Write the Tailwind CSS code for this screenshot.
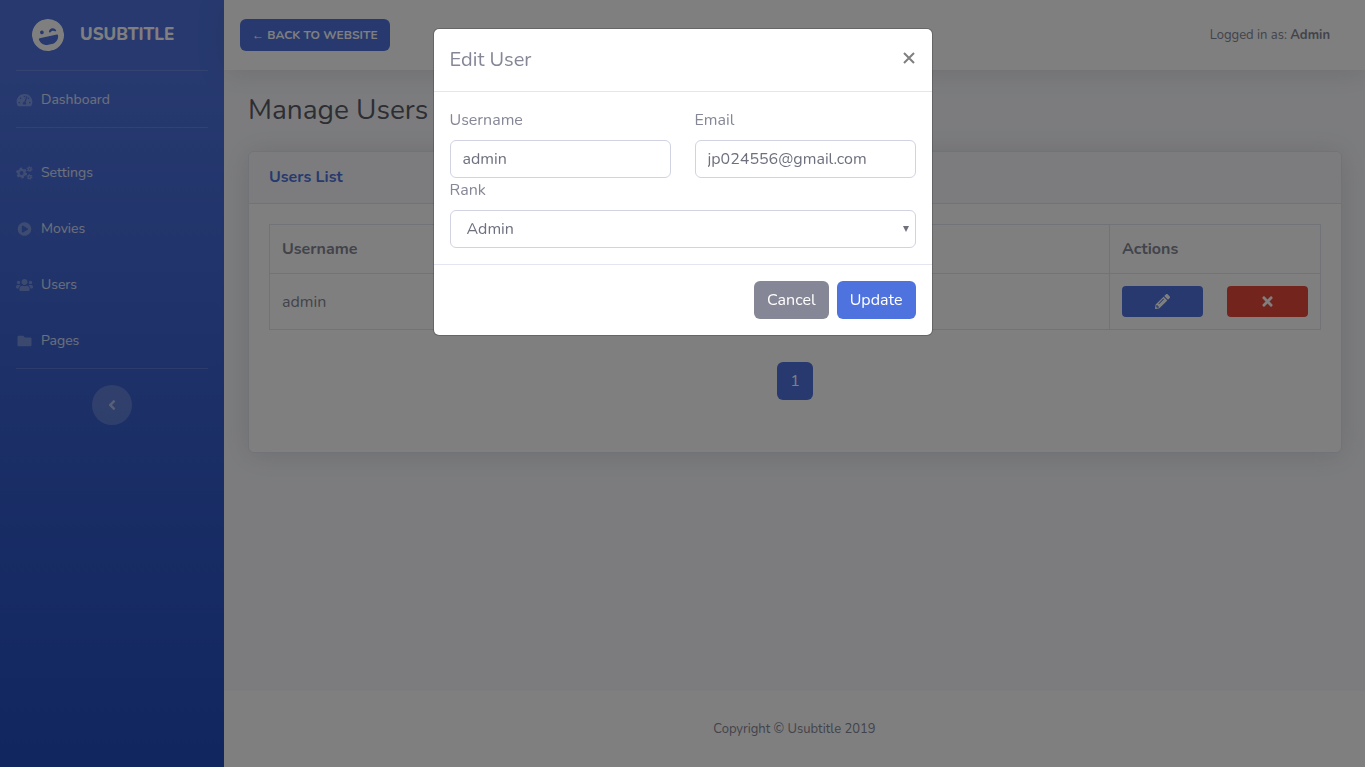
<!DOCTYPE html>
<html lang="en">
<head>
  <meta charset="UTF-8">
  <meta name="viewport" content="width=device-width, initial-scale=1.0">
  <title>Usubtitle - Manage Users</title>
  <script src="https://cdn.jsdelivr.net/npm/@tailwindcss/browser@4"></script>
</head>
<body class="bg-[#f8f9fc] font-['Nunito','Open_Sans',sans-serif] text-base text-[#858796]">

  <div class="flex min-h-screen">

    <!-- Sidebar -->
    <nav class="flex w-56 shrink-0 flex-col bg-linear-to-b from-[#4e73df] from-10% to-[#224abe] text-sm text-white/80">
      <a href="#" class="flex h-[70px] items-center gap-4 px-8 text-[17px] leading-6 font-extrabold text-white">
        <svg class="size-8 -rotate-12" viewBox="0 0 496 496" fill="currentColor" aria-hidden="true">
          <path fill-rule="evenodd" d="M248 0a248 248 0 1 0 0 496a248 248 0 1 0 0-496zM164 160a29 29 0 1 1 0 58a29 29 0 1 1 0-58zM272 202c8-26 32-42 58-42s48 16 56 42c3 12-12 20-21 11c-20-21-50-21-70 0c-9 9-26 1-23-11zM112 270h272c10 0 17 8 16 17c-7 62-60 111-124 111h-56c-64 0-117-49-124-111c-1-9 6-17 16-17z"/>
        </svg>
        <span>USUBTITLE</span>
      </a>
      <hr class="mx-4 border-white/15">
      <a href="#" class="flex h-14 items-center gap-2 px-4 pt-px">
        <svg class="h-[14px] w-[17px] text-white/30" viewBox="0 0 576 512" fill="currentColor" aria-hidden="true"><path d="M288 32C128.94 32 0 160.94 0 320c0 52.8 14.25 102.26 39.06 144.8 5.61 9.62 16.3 15.2 27.44 15.2h443c11.14 0 21.83-5.58 27.44-15.2C561.75 422.26 576 372.8 576 320c0-159.06-128.94-288-288-288zm0 64c14.71 0 26.58 10.13 30.32 23.65-1.11 2.26-2.64 4.23-3.45 6.67l-9.22 27.67c-5.13 3.49-10.97 6.01-17.64 6.01-17.67 0-32-14.33-32-32S270.33 96 288 96zM96 384c-17.67 0-32-14.33-32-32s14.33-32 32-32 32 14.33 32 32-14.33 32-32 32zm48-160c-17.67 0-32-14.33-32-32s14.33-32 32-32 32 14.33 32 32-14.33 32-32 32zm246.77-72.41l-61.33 184C343.13 347.33 352 364.54 352 384c0 11.72-3.38 22.55-8.88 32H232.88c-5.5-9.45-8.88-20.28-8.88-32 0-33.94 26.5-61.43 59.9-63.59l61.34-184.01c4.17-12.56 17.73-19.45 30.36-15.17 12.57 4.19 19.35 17.79 15.17 30.36zm14.66 57.2l15.52-46.55c3.47-1.29 7.13-2.23 11.05-2.23 17.67 0 32 14.33 32 32s-14.33 32-32 32c-11.38-.01-20.89-6.28-26.57-15.22zM480 384c-17.67 0-32-14.33-32-32s14.33-32 32-32 32 14.33 32 32-14.33 32-32 32z"/></svg>
        Dashboard
      </a>
      <hr class="mx-4 mb-4 border-white/15">
      <a href="#" class="flex h-14 items-center gap-2 px-4 pt-px">
        <svg class="h-[14px] w-[17px] text-white/30" viewBox="0 0 640 512" fill="none" stroke="currentColor" aria-hidden="true">
          <circle cx="210" cy="256" r="118" stroke-width="88"/>
          <circle cx="210" cy="256" r="180" stroke-width="54" stroke-dasharray="94 94.5"/>
          <circle cx="512" cy="108" r="56" stroke-width="52"/>
          <circle cx="512" cy="108" r="94" stroke-width="32" stroke-dasharray="49 49.4"/>
          <circle cx="512" cy="404" r="56" stroke-width="52"/>
          <circle cx="512" cy="404" r="94" stroke-width="32" stroke-dasharray="49 49.4"/>
        </svg>
        Settings
      </a>
      <a href="#" class="flex h-14 items-center gap-2 px-4 pt-px">
        <svg class="h-[14px] w-[17px] text-white/30" viewBox="0 0 512 512" fill="currentColor" aria-hidden="true"><path d="M256 8C119 8 8 119 8 256s111 248 248 248 248-111 248-248S393 8 256 8zm115.7 272l-176 101c-15.8 8.8-35.7-2.5-35.7-21V152c0-18.4 19.8-29.8 35.7-21l176 107c16.4 9.2 16.4 32.9 0 42z"/></svg>
        Movies
      </a>
      <a href="#" class="flex h-14 items-center gap-2 px-4 pt-px">
        <svg class="h-[14px] w-[17px] text-white/30" viewBox="0 0 640 512" fill="currentColor" aria-hidden="true"><path d="M96 224c35.3 0 64-28.7 64-64s-28.7-64-64-64-64 28.7-64 64 28.7 64 64 64zm448 0c35.3 0 64-28.7 64-64s-28.7-64-64-64-64 28.7-64 64 28.7 64 64 64zm32 32h-64c-17.6 0-33.5 7.1-45.1 18.6 40.3 22.1 68.9 62 75.1 109.4h66c17.7 0 32-14.3 32-32v-32c0-35.3-28.7-64-64-64zm-256 0c61.9 0 112-50.1 112-112S381.9 32 320 32 208 82.1 208 144s50.1 112 112 112zm76.8 32h-8.3c-20.8 10-43.9 16-68.5 16s-47.6-6-68.5-16h-8.3C179.6 288 128 339.6 128 403.2V432c0 26.5 21.5 48 48 48h288c26.5 0 48-21.5 48-48v-28.8c0-63.6-51.6-115.2-115.2-115.2zm-223.7-13.4C161.5 263.1 145.6 256 128 256H64c-35.3 0-64 28.7-64 64v32c0 17.7 14.3 32 32 32h65.9c6.3-47.4 34.9-87.3 75.2-109.4z"/></svg>
        Users
      </a>
      <a href="#" class="flex h-14 items-center gap-2 px-4 pt-px">
        <svg class="h-[14px] w-[17px] text-white/30" viewBox="0 0 512 512" fill="currentColor" aria-hidden="true"><path d="M464 128H272l-64-64H48C21.49 64 0 85.49 0 112v288c0 26.51 21.49 48 48 48h416c26.51 0 48-21.49 48-48V176c0-26.51-21.49-48-48-48z"/></svg>
        Pages
      </a>
      <hr class="mx-4 mb-4 border-white/15">
      <button type="button" aria-label="Toggle sidebar" class="flex size-10 items-center justify-center self-center rounded-full bg-white/20 text-white/50">
        <svg class="h-4 w-2" viewBox="0 0 256 512" fill="currentColor"><path d="M31.7 239l136-136c9.4-9.4 24.6-9.4 33.9 0l22.6 22.6c9.4 9.4 9.4 24.6 0 33.9L127.9 256l96.4 96.4c9.4 9.4 9.4 24.6 0 33.9L201.7 409c-9.4 9.4-24.6 9.4-33.9 0l-136-136c-9.5-9.4-9.5-24.6-.1-34z"/></svg>
      </button>
    </nav>

    <!-- Content -->
    <div class="flex min-w-0 grow flex-col">
      <header class="flex h-[70px] items-center justify-between bg-white pr-[35px] pl-4 shadow-[0_2px_28px_0_rgba(58,59,69,0.15)]">
        <a href="#" class="rounded-md bg-[#4e73df] px-3 py-2 text-xs leading-4 font-bold text-white">← BACK TO WEBSITE</a>
        <p class="text-[13px] leading-5">Logged in as: <b>Admin</b></p>
      </header>

      <main class="grow pt-6 pr-[23px] pl-6">
        <h1 class="mb-6 text-[28px] leading-[33px] text-[#5a5c69]">Manage Users</h1>

        <section class="rounded-md border border-[#e3e6f0] bg-white shadow-[0_2px_28px_0_rgba(58,59,69,0.15)]">
          <h2 class="rounded-t-md border-b border-[#e3e6f0] bg-[#f8f9fc] px-5 py-3 leading-[27px] font-bold text-[#4e73df]">Users List</h2>
          <div class="p-5 pb-[52px]">
            <table class="w-full border-collapse border border-[#e3e6f0] text-left">
              <thead>
                <tr class="h-[49px]">
                  <th class="border-b border-[#e3e6f0] px-3">Username</th>
                  <th class="w-[211px] border border-[#e3e6f0] px-3">Actions</th>
                </tr>
              </thead>
              <tbody>
                <tr class="h-14">
                  <td class="px-3">admin</td>
                  <td class="border border-[#e3e6f0] px-3">
                    <div class="flex gap-6">
                      <button type="button" aria-label="Edit" class="flex h-[31px] grow items-center justify-center rounded-sm bg-[#4e73df] text-white">
                        <svg class="size-[15px]" viewBox="0 0 512 512" fill="currentColor"><path d="M497.9 142.1l-46.1 46.1c-4.7 4.7-12.3 4.7-17 0l-111-111c-4.7-4.7-4.7-12.3 0-17l46.1-46.1c18.7-18.7 49.1-18.7 67.9 0l60.1 60.1c18.8 18.7 18.8 49.1 0 67.9zM284.2 99.8L21.6 362.4.4 483.9c-2.9 16.4 11.4 30.6 27.8 27.8l121.5-21.3 262.6-262.6c4.7-4.7 4.7-12.3 0-17l-111-111c-4.8-4.7-12.4-4.7-17.1 0zM124.1 339.9c-5.5-5.5-5.5-14.3 0-19.8l154-154c5.5-5.5 14.3-5.5 19.8 0s5.5 14.3 0 19.8l-154 154c-5.5 5.5-14.3 5.5-19.8 0zM88 424h48v36.3l-64.5 11.3-31.1-31.1L51.7 376H88v48z"/></svg>
                      </button>
                      <button type="button" aria-label="Delete" class="flex h-[31px] grow items-center justify-center rounded-sm bg-[#e74a3b] text-white">
                        <svg class="size-[15px]" viewBox="-80 0 512 512" fill="currentColor"><path d="M242.72 256l100.07-100.07c12.28-12.28 12.28-32.19 0-44.48l-22.24-22.24c-12.28-12.28-32.19-12.28-44.48 0L176 189.28 75.93 89.21c-12.28-12.28-32.19-12.28-44.48 0L9.21 111.45c-12.28 12.28-12.28 32.19 0 44.48L109.28 256 9.21 356.07c-12.28 12.28-12.28 32.19 0 44.48l22.24 22.24c12.28 12.28 32.2 12.28 44.48 0L176 322.72l100.07 100.07c12.28 12.28 32.2 12.28 44.48 0l22.24-22.24c12.28-12.28 12.28-32.19 0-44.48L242.72 256z"/></svg>
                      </button>
                    </div>
                  </td>
                </tr>
              </tbody>
            </table>
            <div class="mt-8 flex justify-center">
              <a href="#" class="flex h-[38px] w-9 items-center justify-center rounded-md bg-[#4e73df] text-white">1</a>
            </div>
          </div>
        </section>
      </main>

      <footer class="bg-white py-7 text-center text-[13px] leading-5">Copyright © Usubtitle 2019</footer>
    </div>
  </div>

  <!-- Edit user modal -->
  <div class="fixed inset-0 bg-black/50 pt-7">
    <form role="dialog" aria-labelledby="modalTitle" class="mx-auto w-[500px] rounded-md border border-black/20 bg-white bg-clip-padding">
      <div class="flex items-start justify-between border-b border-[#e3e6f0] p-4">
        <h2 id="modalTitle" class="text-xl leading-[30px]">Edit User</h2>
        <button type="button" aria-label="Close" class="flex h-[26px] items-center pr-px text-black/50">
          <svg class="size-3" viewBox="0 0 12 12" fill="none" stroke="currentColor" stroke-width="2"><path d="M1 1l10 10M11 1L1 11"/></svg>
        </button>
      </div>
      <div class="grid grid-cols-2 gap-x-6 p-4">
        <div>
          <label for="username" class="mb-2 block">Username</label>
          <input id="username" type="text" value="admin" class="block h-[38px] w-full rounded-md border border-[#d1d3e2] bg-white px-3 text-[#6e707e]">
        </div>
        <div>
          <label for="email" class="mb-2 block">Email</label>
          <input id="email" type="email" value="jp024556@gmail.com" class="block h-[38px] w-full rounded-md border border-[#d1d3e2] bg-white px-3 text-[#6e707e]">
        </div>
        <div class="col-span-2">
          <label for="rank" class="mb-2 block">Rank</label>
          <div class="relative">
            <select id="rank" class="block h-[38px] w-full appearance-none rounded-md border border-[#d1d3e2] bg-white px-4 text-[#6e707e]">
              <option>Admin</option>
            </select>
            <svg class="pointer-events-none absolute top-4 right-[7px] h-[6px] w-[6px] text-[#6e707e]" viewBox="0 0 6 6" fill="currentColor" aria-hidden="true"><path d="M0 0h6L3 6z"/></svg>
          </div>
        </div>
      </div>
      <div class="flex justify-end gap-2 border-t border-[#e3e6f0] p-4">
        <button type="button" class="h-[38px] rounded-md bg-[#858796] px-[13px] text-white">Cancel</button>
        <button type="submit" class="h-[38px] rounded-md bg-[#4e73df] px-[13px] text-white">Update</button>
      </div>
    </form>
  </div>

</body>
</html>
